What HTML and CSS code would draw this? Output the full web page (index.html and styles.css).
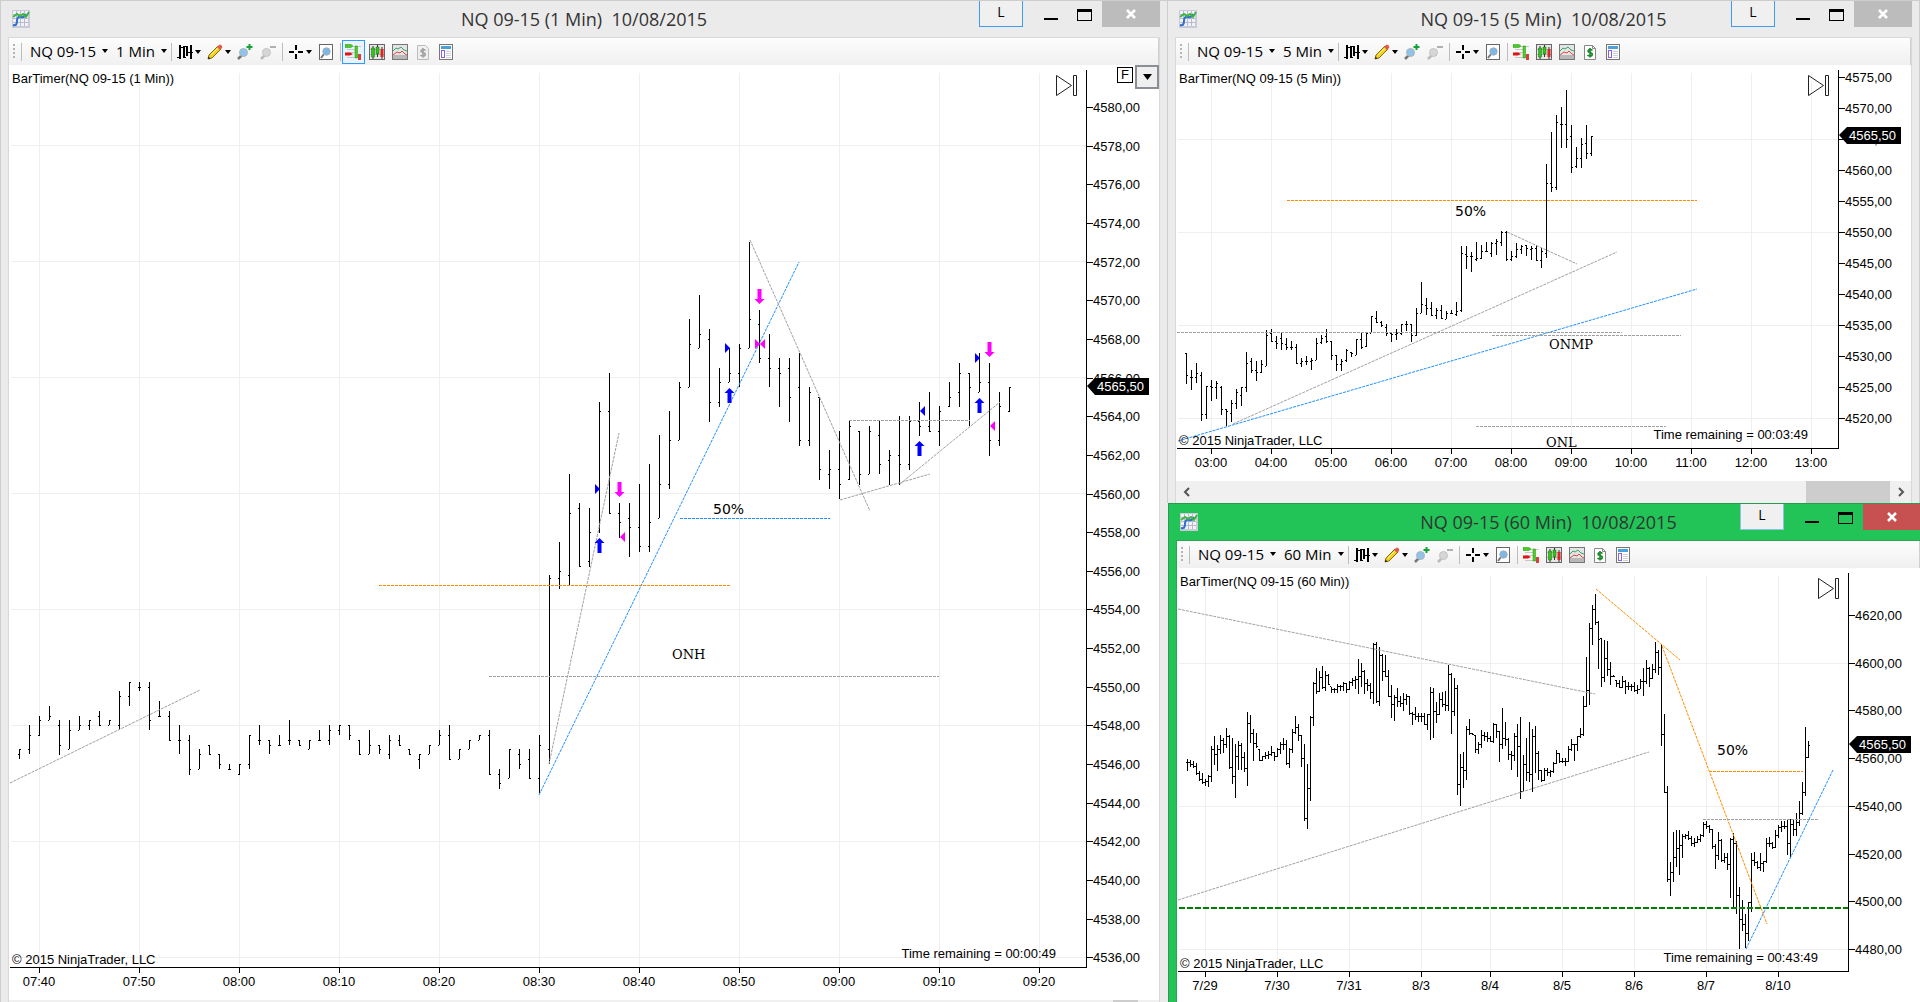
FILE: index.html
```html
<!DOCTYPE html>
<html lang="en">
<head>
<meta charset="utf-8">
<title>NinjaTrader charts – NQ 09-15</title>
<link rel="stylesheet" href="styles.css">
</head>
<body>
<svg class="sprite" aria-hidden="true">
  <symbol id="i-app" viewBox="0 0 18 18">
    <rect x="0" y="0" width="18" height="18" fill="#c9c9d8"/>
    <path d="M1 1h15v15H1z" fill="#f1f1fa"/>
    <path d="M4.500 1v15M8.500 1v15M12.500 1v15M1 4.500h15M1 8.500h15M1 12.500h15" stroke="#b9b9cc" fill="none"/>
    <path d="M1 15q4 1 4-4t4-4q3 1 5-3" stroke="#2f6fd0" stroke-width="2" fill="none"/>
    <path d="M1 7l4-3 3 2 3-2 3 3 3-5" stroke="#3fb53f" stroke-width="2" fill="none"/>
  </symbol>
  <symbol id="i-down" viewBox="0 0 6 4"><path d="M0 0h6L3 4z"/></symbol>
  <symbol id="i-bars" viewBox="0 0 16 16">
    <path d="M3 1v14M7 2v12M10 2v10M14 1v14" stroke="#000" stroke-width="2" fill="none"/>
    <path d="M0 13.500h3M3 3.500h3M7 13.500h2M8 2.500h3M11 8.500h5" stroke="#000" stroke-width="1" fill="none"/>
  </symbol>
  <symbol id="i-pencil" viewBox="0 0 16 16">
    <path d="M1 15l1-4 9-9 3 3-9 9z" fill="#f6d21c" stroke="#8a6a10" stroke-width="1"/>
    <path d="M10 3l2-2q1-1 2.500 0.500T15 4l-2 2z" fill="#e25a4a"/>
    <path d="M1 15l.6-2.500 1.900 1.900z" fill="#222"/>
    <path d="M4 11l7-7" stroke="#fff3a0" fill="none"/>
  </symbol>
  <symbol id="i-zoomin" viewBox="0 0 16 16">
    <path d="M1 15l4-4" stroke="#777" stroke-width="2.500" fill="none"/>
    <circle cx="6.500" cy="8.500" r="4" fill="#8fc3ea" stroke="#aab4bd"/>
    <path d="M12.500 0v6M9.500 3h6" stroke="#14a336" stroke-width="2" fill="none"/>
  </symbol>
  <symbol id="i-zoomout" viewBox="0 0 16 16">
    <path d="M1 15l4-4" stroke="#bbb" stroke-width="2.500" fill="none"/>
    <circle cx="6.500" cy="8.500" r="4" fill="#d6d6d6" stroke="#c4c4c4"/>
    <path d="M10 3h6" stroke="#b0b0b0" stroke-width="2" fill="none"/>
  </symbol>
  <symbol id="i-cross" viewBox="0 0 16 16">
    <path d="M8 1v5M8 10v5M1 8h5M10 8h5" stroke="#000" stroke-width="2" fill="none"/>
  </symbol>
  <symbol id="i-find" viewBox="0 0 16 16">
    <rect x="1.500" y=".5" width="13" height="15" fill="#fff" stroke="#666"/>
    <path d="M3 14l3-4" stroke="#777" stroke-width="2" fill="none"/>
    <circle cx="8.500" cy="7.500" r="3.700" fill="#7db8e4" stroke="#9fb0bd"/>
  </symbol>
  <symbol id="i-depth" viewBox="0 0 16 16">
    <path d="M8 2.500h8M2 5.500h8M2 8.500h8M2 13.500h14M10 11.500h6" stroke="#c8c8c8" fill="none"/>
    <path d="M0 .5h6l2 1.500-2 1.500H0z" fill="#3fd11b" stroke="#2d8f10" stroke-width=".5"/>
    <path d="M0 8.500h5l3 1.500-3 1.500H0z" fill="#e01616"/>
    <path d="M10 2h2.500v12H10z" fill="#46d41e" stroke="#2d8f10" stroke-width=".5"/>
    <path d="M13 10h3v6h-3z" fill="#d24040"/>
  </symbol>
  <symbol id="i-candles" viewBox="0 0 16 16">
    <rect x=".5" y=".5" width="15" height="15" fill="#e6e6e6" stroke="#666"/>
    <path d="M1 5.500h14M1 10.500h14" stroke="#b5b5b5" fill="none"/>
    <path d="M4 2v13M8.500 1v12M13 3v12" stroke="#333" fill="none"/>
    <path d="M2.500 4h3v9h-3zM7 3h3v7H7z" fill="#31c41a" stroke="#1c6a10" stroke-width=".5"/><path d="M11.500 5h3v8h-3z" fill="#dc2626"/>
  </symbol>
  <symbol id="i-ind" viewBox="0 0 16 16">
    <rect x=".5" y=".5" width="15" height="15" fill="#e4e4e4" stroke="#777"/>
    <path d="M1 11h14v4H1z" fill="#b8b8b8"/>
    <path d="M1 7l3-3 2 1 3-2 3 3 3 1" stroke="#2fa866" fill="none"/>
    <path d="M1 11l4-3 3 1 2-2 3 3 2 1" stroke="#e04848" fill="none"/>
  </symbol>
  <symbol id="i-pnl" viewBox="0 0 16 16">
    <path d="M2.500 1.500h8l3 3v11h-11z" fill="#fff" stroke="#888"/><path d="M10.500 1.500v3h3" fill="none" stroke="#888"/>
    <path d="M10.500 6.500q-1-1-2.500-1t-2 1.500q0 1 2 1.500t2.300 1.500q0 2-2.300 2-1.700 0-2.500-1M8 4v9.500" stroke="#1d8a2a" stroke-width="1.700" fill="none"/>
  </symbol>
  <symbol id="i-pnloff" viewBox="0 0 16 16">
    <path d="M2.500 1.500h8l3 3v11h-11z" fill="#f0f0f0" stroke="#bbb"/>
    <path d="M10.500 6.500q-1-1-2.500-1t-2 1.500q0 1 2 1.500t2.300 1.500q0 2-2.300 2-1.700 0-2.500-1M8 4v9.500" stroke="#a4a4a4" stroke-width="1.700" fill="none"/>
  </symbol>
  <symbol id="i-props" viewBox="0 0 16 16">
    <rect x="1.500" y=".5" width="13" height="15" fill="#fff" stroke="#777"/>
    <path d="M3 2h10v3H3z" fill="#4aa0d8"/><rect x="3.500" y="6.500" width="3" height="7" fill="#fff" stroke="#8b5cf0"/>
    <path d="M8 7.500h5M8 9.500h5M8 11.500h5M8 13.500h5" stroke="#cfcfdc" fill="none"/>
  </symbol>
  <symbol id="i-min" viewBox="0 0 16 16"><path d="M1 12h14v2H1z"/></symbol>
  <symbol id="i-max" viewBox="0 0 16 16"><path d="M1 3h15v12H1zM2 6v8h13V6z" fill-rule="evenodd"/></symbol>
  <symbol id="i-close" viewBox="0 0 16 16"><path d="M4 4l8 8M12 4l-8 8" stroke="currentColor" stroke-width="2.500" fill="none"/></symbol>
  <symbol id="i-left" viewBox="0 0 8 10"><path d="M6 1L2 5l4 4" stroke="#555" stroke-width="2" fill="none"/></symbol>
  <symbol id="i-right" viewBox="0 0 8 10"><path d="M2 1l4 4-4 4" stroke="#555" stroke-width="2" fill="none"/></symbol>
</svg>

<main class="desktop">
  <section class="window window-main" aria-label="NQ 09-15 1 minute chart">
    <header class="titlebar">
      <svg class="app-icon"><use href="#i-app"/></svg>
      <h1 class="title">NQ 09-15 (1 Min)&nbsp; 10/08/2015</h1>
      <div class="controls"></div>
    </header>
    <div class="client">
      <div class="toolbar" data-period="1 Min" data-pnl="i-pnloff" data-depth="on"></div>
      <div class="chart-wrap">
        <svg class="chart" id="chart-1" viewBox="9 65 1150 935" role="img" aria-label="1 minute price bars"></svg>
        <div class="chart-tools">
          <button class="fixed-scale" type="button">F</button>
          <button class="scale-menu" type="button" aria-label="Scale options"><svg><use href="#i-down"/></svg></button>
        </div>
      </div>
      <div class="scrollbar"><button type="button" aria-label="Scroll left"><svg><use href="#i-left"/></svg></button><span class="thumb thumb-small"></span><button type="button" aria-label="Scroll right"><svg><use href="#i-right"/></svg></button></div>
    </div>
  </section>

  <section class="window window-top" aria-label="NQ 09-15 5 minute chart">
    <header class="titlebar">
      <svg class="app-icon"><use href="#i-app"/></svg>
      <h1 class="title">NQ 09-15 (5 Min)&nbsp; 10/08/2015</h1>
      <div class="controls"></div>
    </header>
    <div class="client">
      <div class="toolbar" data-period="5 Min" data-pnl="i-pnl"></div>
      <div class="chart-wrap">
        <svg class="chart" id="chart-5" viewBox="1176 65 735 416" role="img" aria-label="5 minute price bars"></svg>
      </div>
      <div class="scrollbar"><button type="button" aria-label="Scroll left"><svg><use href="#i-left"/></svg></button><span class="thumb"></span><button type="button" aria-label="Scroll right"><svg><use href="#i-right"/></svg></button></div>
    </div>
  </section>

  <section class="window window-active" aria-label="NQ 09-15 60 minute chart">
    <header class="titlebar">
      <svg class="app-icon"><use href="#i-app"/></svg>
      <h1 class="title">NQ 09-15 (60 Min)&nbsp; 10/08/2015</h1>
      <div class="controls"></div>
    </header>
    <div class="client">
      <div class="toolbar" data-period="60 Min" data-pnl="i-pnl"></div>
      <div class="chart-wrap">
        <svg class="chart" id="chart-60" viewBox="1177 568 743 440" role="img" aria-label="60 minute price bars"></svg>
      </div>
    </div>
  </section>
</main>
<script src="charts.js"></script>
</body>
</html>
```

FILE: styles.css
```css
* { box-sizing: border-box; }

body {
  margin: 0;
  background: #ebebeb;
  color: #000;
  font-family: "Open Sans", "Noto Sans", sans-serif;
}

button {
  margin: 0;
  padding: 0;
  border: 0;
  background: none;
  color: inherit;
  font: inherit;
}

.sprite { position: absolute; width: 0; height: 0; }

/* Desktop: one large window on the left, two stacked on the right */
.desktop {
  display: grid;
  grid-template-columns: 1167fr 753fr;
  grid-template-rows: auto 1fr;
  height: 100vh;
  overflow: hidden;
}

.window {
  --frame: #ebebeb;
  --edge: #cdcdcd;
  --client-edge: #d9d9d9;
  --close: #bcbcbc;
  min-width: 0;
  border: 1px solid var(--edge);
  border-bottom: 0;
  padding: 0 7px;
  background: var(--frame);
}

.window-main { grid-row: 1 / 3; border-right: 0; }

.window-active {
  --frame: #22c457;
  --edge: #2b9a4f;
  --client-edge: #2ba552;
  --close: #c75050;
  margin: 0 -9px 0 1px;
}

/* Title bar */
.titlebar {
  display: grid;
  grid-template-columns: 1fr auto 1fr;
  height: 36px;
}

.app-icon { width: 18px; height: 18px; margin: 9px 0 0 4px; }

.title {
  margin: 0;
  color: #333;
  font-size: 18px;
  font-weight: 400;
  line-height: 36px;
  white-space: nowrap;
}

.controls { display: flex; justify-content: flex-end; height: 26px; }
.controls svg { width: 16px; height: 16px; display: block; margin: 5px auto; }

.link-button {
  width: 44px;
  margin-right: 14px;
  border: 1px solid #3d9cf5;
  border-top: 0;
  padding-bottom: 4px;
  background: #f0f0f0;
  font-size: 14px;
  line-height: 20px;
}

.window-active .link-button { border-color: #8cc4e8; }

.minimize { width: 28px; }
.maximize { width: 37px; }
.close { width: 58px; background: var(--close); color: #fff; }

/* Client area */
.client {
  border: 1px solid var(--client-edge);
  border-bottom: 0;
  background: #fff;
}

.toolbar {
  display: flex;
  align-items: center;
  height: 27px;
  padding-left: 4px;
  border-right: 1px solid #d0d0d0;
  background: linear-gradient(#fdfdfd, #f0f0f0);
  font-size: 15px;
  line-height: 20px;
}

.grip {
  width: 2px;
  height: 16px;
  margin-right: 3px;
  background: repeating-linear-gradient(#b4b4b4 0 2px, transparent 2px 4px);
}

.divider { width: 1px; height: 18px; margin: 0 1px 0 3px; background: #bdbdbd; }

.picker { display: flex; align-items: center; gap: 6px; margin: 0 1px 2px 7px; white-space: nowrap; }

.tool {
  display: flex;
  align-items: center;
  gap: 2px;
  width: 23px;
  height: 24px;
  padding-left: 3px;
  border: 1px solid transparent;
}

.tool-menu { width: 30px; }
.tool-on { border-color: #3399ff; background: #e8f3fd; padding-left: 2px; }
.tool svg { flex: none; width: 16px; height: 16px; }
.picker .caret, .tool .caret { width: 6px; height: 4px; }

/* Chart */
.chart-wrap { position: relative; }
.chart { display: block; width: 100%; height: auto; overflow: hidden; }
.chart text { font-family: "Liberation Sans", Arial, sans-serif; font-size: 13px; }
.chart .note { font-family: "DejaVu Sans", sans-serif; font-size: 14px; }
.chart .note-serif { font-family: "DejaVu Serif", serif; font-size: 13px; }
.chart .last { fill: #fff; }
.grid, .axis, .bars { shape-rendering: crispEdges; }
.grid { fill: #efefef; }
.line { fill: none; stroke-width: 1; stroke-dasharray: 3 1; }
.gray { stroke: #a0a0a0; }
.blue { stroke: #1e90ff; }
.orange { stroke: #ff8c00; }
.green { stroke: #008000; stroke-width: 2; stroke-dasharray: 6 2; }
.play { fill: none; stroke: #222; stroke-width: 1; }

.chart-tools {
  position: absolute;
  top: 0;
  right: 0;
  display: flex;
  align-items: flex-start;
  gap: 2px;
}

.fixed-scale {
  width: 16px;
  height: 16px;
  margin-top: 2px;
  border: 1px solid #000;
  background: #fff;
  font-family: "Liberation Sans", Arial, sans-serif;
  font-size: 13px;
  line-height: 14px;
}

.scale-menu {
  width: 24px;
  height: 24px;
  border: 2px solid #8a8f96;
  background: #efefef;
}

.scale-menu svg { display: block; width: 9px; height: 6px; margin: 0 auto; }

/* Scroll bar */
.scrollbar { display: flex; height: 22px; background: #f0f0f0; }
.scrollbar button { width: 21px; }
.scrollbar svg { display: block; width: 8px; height: 10px; margin: 0 auto; }
.thumb { width: 84px; margin-left: auto; background: #cdcdcd; }
.thumb-small { width: 25px; }
```

FILE: charts.js
```js
// Window buttons and toolbars, shared by every chart window.
const icon = (id, cls = '') => `<svg class="${cls}" aria-hidden="true"><use href="#${id}"/></svg>`;
const caret = icon('i-down', 'caret');

document.querySelectorAll('.controls').forEach((el) => {
  el.innerHTML =
    '<button class="link-button" type="button">L</button>' +
    `<button class="minimize" type="button" aria-label="Minimize">${icon('i-min')}</button>` +
    `<button class="maximize" type="button" aria-label="Maximize">${icon('i-max')}</button>` +
    `<button class="close" type="button" aria-label="Close">${icon('i-close')}</button>`;
});

document.querySelectorAll('.toolbar').forEach((el) => {
  const tool = (id, label, menu, on) =>
    `<button class="tool${menu ? ' tool-menu' : ''}${on ? ' tool-on' : ''}" type="button" aria-label="${label}">${icon(id)}${menu ? caret : ''}</button>`;
  const divider = '<span class="divider"></span>';
  el.innerHTML =
    '<span class="grip"></span>' + divider +
    `<button class="picker" type="button">NQ 09-15${caret}</button>` +
    `<button class="picker" type="button">${el.dataset.period}${caret}</button>` + divider +
    tool('i-bars', 'Chart style', true) + tool('i-pencil', 'Drawing tools', true) +
    tool('i-zoomin', 'Zoom in') + tool('i-zoomout', 'Zoom out') + divider +
    tool('i-cross', 'Cursor', true) + tool('i-find', 'Data box') + divider +
    tool('i-depth', 'Chart trader', false, el.dataset.depth === 'on') +
    tool('i-candles', 'Data series') + tool('i-ind', 'Indicators') +
    tool(el.dataset.pnl, 'Strategies') + tool('i-props', 'Properties');
});

// Each run of bars is [high, low, open, close] in thirds of a unit below y0.
// When a row has three values the open is the previous close.
function barPath(runs) {
  let d = '';
  let last = null;
  for (const { x0, step, y0, rows } of runs) {
    rows.forEach((row, i) => {
      const [high, low] = row;
      const close = row[row.length - 1];
      let open = row.length === 4 ? row[2] : (last ?? close);
      open = Math.max(high, Math.min(low, open));
      last = close;
      const x = x0 + i * step;
      const top = y0 + Math.round(high / 3);
      const bottom = y0 + Math.max(Math.round(low / 3), Math.floor(close / 3) + 1);
      const o = y0 + Math.floor(open / 3);
      const c = y0 + Math.floor(close / 3);
      d += `M${x} ${top}h1V${bottom}h-1zM${x - 1} ${o}h1v1h-1zM${x + 1} ${c}h1v1h-1z`;
    });
  }
  return d;
}

function draw(id, c) {
  const { left, right, top, bottom } = c.plot;
  let s = '<g class="grid">';
  c.times.forEach(([x]) => { s += `<rect x="${x}" y="${top + 3}" width="1" height="${bottom - top - 3}"/>`; });
  c.gridY.forEach((y) => { s += `<rect x="${left + 1}" y="${y}" width="${right - left - 1}" height="1"/>`; });
  s += '</g><g class="axis">';
  s += `<rect x="${right}" y="${top}" width="1" height="${bottom - top + 1}"/>`;
  s += `<rect x="${left}" y="${bottom}" width="${right - left + 1}" height="1"/>`;
  c.times.forEach(([x]) => { s += `<rect x="${x}" y="${bottom}" width="1" height="6"/>`; });
  c.prices.forEach(([y]) => { s += `<rect x="${right}" y="${y}" width="7" height="1"/>`; });
  s += '</g>';
  s += `<path class="bars" d="${barPath(c.bars)}"/>`;
  c.lines.forEach(([cls, x1, y1, x2, y2]) => {
    const flat = y1 === y2 && cls !== 'green' ? 0.5 : 0;
    s += `<path class="line ${cls}" d="M${x1} ${y1 + flat}L${x2} ${y2 + flat}"/>`;
  });
  (c.arrows || []).forEach(([dir, x, y]) => {
    s += dir === 'up'
      ? `<path fill="#00f" d="M${x} ${y}l5 5h-3v10h-4v-10h-3z"/>`
      : `<path fill="#f0f" d="M${x} ${y + 15}l5-5h-3v-10h-4v10h-3z"/>`;
  });
  (c.marks || []).forEach(([dir, fill, x, y]) => {
    s += `<path fill="${fill}" d="M${x} ${y}l${dir === 'right' ? -5 : 5}-5v10z"/>`;
  });
  c.prices.forEach(([y, t]) => { s += `<text x="${right + 7}" y="${y + 5}">${t}</text>`; });
  c.times.forEach(([x, t]) => { s += `<text x="${x}" y="${bottom + 19}" text-anchor="middle">${t}</text>`; });
  const m = c.last;
  s += `<path d="M${right + 1} ${m}l8-8h54v17h-54z"/><text class="last" x="${right + 11}" y="${m + 5}">4565,50</text>`;
  c.notes.forEach(([x, y, t]) => {
    s += `<text class="note${t === '50%' ? '' : ' note-serif'}" x="${x}" y="${y}">${t}</text>`;
  });
  s += `<text x="${left + 2}" y="${top + 13}">${c.name}</text>`;
  s += `<text x="${left + 2}" y="${c.copyY}">© 2015 NinjaTrader, LLC</text>`;
  s += `<text x="${right - 30}" y="${c.remainY}" text-anchor="end">Time remaining = ${c.remain}</text>`;
  const px = right - 30;
  s += `<path class="play" d="M${px + 0.5} ${top + 5.5}v20l15-10zM${px + 17.5} ${top + 5.5}h3v20h-3z"/>`;
  document.getElementById(id).innerHTML = s;
}

const range = (n, fn) => Array.from({ length: n }, (_, i) => fn(i));
const pad = (n) => String(n).padStart(2, '0');

draw('chart-1', {
  name: 'BarTimer(NQ 09-15 (1 Min))',
  plot: { left: 10, right: 1086, top: 70, bottom: 967 },
  copyY: 964, remainY: 958, remain: '00:00:49', last: 386,
  times: range(11, (i) => { const m = 460 + i * 10; return [39 + i * 100, `${pad(Math.floor(m / 60))}:${pad(m % 60)}`]; }),
  prices: range(23, (i) => [Math.round(107 + i * 38.65), `${4580 - i * 2},00`]),
  gridY: [145, 261, 377, 493, 609, 725, 841, 957],
  bars: [
    { x0: 19, step: 10, y0: 640, rows: [
      [328,358,343,328],[255,343,328,286],[229,287,286,241],[198,241,241,229],[240,344,256,316],[240,328,328,271],
      [228,271,271,256],[241,271,256,241],[213,256,229,256],[241,256,256,241],[154,271,256,169],[127,199,169,127],
      [127,154,142,142],[127,271,142,241],[184,229,229,229],[213,301,229,301],[255,343,301,301],[285,404,301,388],
      [328,388,388,343],[316,343,316,343],[343,388,343,373],[373,388,388,388],[373,404,404,373],[286,388,373,286],
      [255,316,301,301],[301,343,301,316],[286,316,316,316],[240,316,301,301],[301,316,301,316],[301,328,328,301],
      [270,301,301,301],[255,316,301,271],[256,286,271,256],[256,301,256,286],[301,343,301,343],[270,343,343,316],
      [316,343,316,328],[286,358,343,301],[286,316,301,316],[328,343,328,343],[343,388,358,343],[316,343,343,316],
      [270,316,316,286],[256,358,286,358],[328,358,358,328],[301,328,328,301],[286,301,301,286],[270,404,286,404],
      [388,446,404,430],[328,415,415,328],[328,388,343,373],[328,415,358,415],[286,460,415,316]] },
    { x0: 549, step: 10, y0: 220, rows: [
      [1066,1633,1588,1075],[966,1108,1075,1054],[763,1098,1066,880],[849,1040,865,1040],[865,1040,1024,937],
      [546,938,808,574],[459,880,574,880],[849,953,880,907],[849,1010,895,922],[793,995,922,979],[732,995,979,907],
      [645,895,895,793],[573,808,793,661],[487,661,661,502],[297,502,502,373],[225,385,385,343],[327,605,358,547],
      [445,560,547,487],[385,487,487,460],[373,502,460,385],[66,385,385,298],[270,430,313,415],[342,502,415,445],
      [414,560,445,460],[414,605,445,532],[400,677,502,661],[502,677,661,517],[532,779,532,748],[690,808,763,748],
      [633,837,748,793]] },
    { x0: 849, step: 10, y0: 320, rows: [
      [303,479,479,319],[334,494,334,463],[318,463,463,334],[303,463,346,433],[390,494,421,406],[289,494,406,433],
      [289,449,433,303],[246,347,303,319],[216,334,319,334],[259,377,334,274],[187,260,259,232],[129,260,216,160],
      [160,319,160,202],[99,217,217,187],[129,407,187,361],[216,377,361,259],[202,275,274,202]] },
  ],
  lines: [
    ['gray', 10, 783, 200, 690], ['gray', 489, 676, 939, 676], ['blue', 539, 795, 799, 262],
    ['gray', 549, 764, 619, 433], ['gray', 750, 240, 870, 511], ['gray', 840, 500, 930, 474],
    ['gray', 900, 484, 1000, 402], ['gray', 849, 420, 970, 420], ['blue', 680, 518, 830, 518],
    ['orange', 379, 585, 730, 585],
  ],
  arrows: [['up', 599.5, 538], ['up', 729.5, 388], ['up', 919.5, 441], ['up', 979.5, 398],
    ['down', 619.5, 482], ['down', 759.5, 289], ['down', 989.5, 342]],
  marks: [['right', '#00f', 600, 489], ['right', '#00f', 730, 348], ['right', '#00f', 980, 358], ['left', '#00f', 920, 411],
    ['left', '#f0f', 620, 537], ['right', '#f0f', 760, 344], ['left', '#f0f', 760, 344], ['left', '#f0f', 990, 426]],
  notes: [[713, 514, '50%'], [672, 659, 'ONH']],
});

draw('chart-5', {
  name: 'BarTimer(NQ 09-15 (5 Min))',
  plot: { left: 1177, right: 1838, top: 70, bottom: 448 },
  copyY: 445, remainY: 439, remain: '00:03:49', last: 135,
  times: range(11, (i) => [1211 + i * 60, `${pad(3 + i)}:00`]),
  prices: range(12, (i) => [77 + i * 31, `${4575 - i * 5},00`]),
  gridY: [139, 232, 325, 418],
  bars: [
    { x0: 1186, step: 5, y0: 300, rows: [
      [160,253,160,226],[210,269,232,232],[190,250,232,220],[216,362,226,343],[259,356,343,259],[240,302,259,262],
      [244,296,262,250],[258,346,262,328],[328,377,328,334],[300,367,340,310],[267,326,310,277],[262,317,285,262],
      [156,275,262,190],[175,220,185,211],[183,244,211,217],[180,220,217,194],[90,199,199,107],[87,125,100,125],
      [108,147,125,130],[100,150,115,130],[114,150,133,142],[124,150,142,142],[132,193,142,190],[175,202,190,184],
      [169,196,184,184],[175,209,184,181],[114,181,181,130],[106,133,127,115],[87,128,110,124],[124,181,124,167],
      [165,212,167,194],[178,212,194,184],[148,185,181,151],[155,172,157,160],[116,166,166,118],[100,148,118,142],
      [98,140,140,100],[49,100,100,49],[34,68,55,67],[64,82,67,76],[73,109,82,100],[98,125,100,103],[88,119,103,100],
      [72,106,100,73],[64,92,73,73],[73,127,73,106],[23,109,106,40]] },
    { x0: 1421, step: 5, y0: 80, rows: [
      [606,700,700,673],[655,705,676,685],[667,707,685,706],[684,717,706,690],[675,718,690,715],[693,718,718,700],
      [690,702,700,700],[667,707,702,693],[498,695,692,520],[498,567,522,528],[517,576,530,530],[487,542,538,535],
      [496,537,535,515],[487,517,515,515],[487,530,520,490],[477,524,490,485],[453,499,487,457],[453,542,457,538],
      [513,542,538,530],[488,533,530,508],[495,522,508,500],[495,529,495,505],[497,540,507,505],[496,542,505,542],
      [503,563,542,515],[252,533,520,310],[156,335,310,322],[105,330,322,127],[82,204,133,133],[30,205,133,178],
      [135,278,168,262],[202,264,258,235],[175,264,235,193],[135,237,190,220],[168,228,220,170]] },
  ],
  lines: [
    ['orange', 1287, 200, 1697, 200], ['blue', 1178, 441, 1697, 289], ['gray', 1233, 424, 1617, 252],
    ['gray', 1507, 232, 1577, 264], ['gray', 1177, 332, 1622, 332], ['gray', 1492, 335, 1681, 335],
    ['gray', 1476, 426, 1666, 426],
  ],
  notes: [[1455, 216, '50%'], [1549, 349, 'ONMP'], [1546, 447, 'ONL']],
});

draw('chart-60', {
  name: 'BarTimer(NQ 09-15 (60 Min))',
  plot: { left: 1178, right: 1848, top: 573, bottom: 971 },
  copyY: 968, remainY: 962, remain: '00:43:49', last: 744,
  times: [[1205, '7/29'], [1277, '7/30'], [1349, '7/31'], [1421, '8/3'], [1490, '8/4'], [1562, '8/5'],
    [1634, '8/6'], [1706, '8/7'], [1778, '8/10']],
  prices: range(8, (i) => [Math.round(615 + i * 47.7), `${4620 - i * 20},00`]),
  gridY: [663, 806, 949],
  bars: [
    { x0: 1187, step: 3, y0: 580, rows: [
      [537,574,547],[540,560,553],[543,565,560],[550,585,580],[573,603,598],[580,613,607],[598,617,603],[585,620,590],
      [498,605,508],[468,555,522],[495,573,508],[465,523,480],[473,520,492],[444,504,470],[465,567,562],[473,613,590],
      [492,654,530],[483,570,495],[488,570,533],[515,577,565],[396,617,430],[405,488,460],[447,543,490],[459,505,500],
      [508,543,540],[527,543,530],[517,536,525],[513,538,523],[498,527,517],[515,543,528],[505,530,508],[485,523,493],
      [474,510,492],[480,555,550],[504,563,507],[448,518,457],[408,462,442],[432,483,467],[465,560,535],[492,722,715],
      [552,746,625],[408,663,412],[307,437,310],[264,342,333],[273,335,293],[258,327,323],[273,333,285],[283,315,313],
      [320,338,328],[323,340,328],[313,340,320],[315,333,320],[307,333,310],[308,338,328],[303,330,307],[295,317,300],
      [288,328,298],[237,342,290],[248,320,273],[270,342,310],[297,333,315],[310,358,338],[189,371,193],[186,368,363],
      [201,377,227],[223,302,275],[226,292,288],[270,350,348],[316,413,373],[345,423,353],[323,380,365],[347,380,370],
      [339,393,358],[343,375,348],[348,405,400],[397,434,403],[380,420,410],[400,425,408],[400,425,408],[400,433,432],
      [402,450,403],[321,479,337],[324,473,395],[366,430,403],[339,405,357],[335,382,373],[333,392,375],[255,393,283],
      [279,462,395],[295,408,325],[316,645,612],[522,678,563],[516,624,570],[438,600,447],[417,464,460],[460,466,463],
      [465,520,507],[485,522,493],[450,503,465],[456,482,468],[455,485,475],[468,487,485],[430,488,433],[432,475,453],
      [453,545,493],[384,508,475],[426,498,478],[474,541,523],[512,570,527],[459,544,468],[432,590,500],[411,657,633],
      [525,637,553],[474,603,577],[426,605,583],[447,636,468],[438,580,520],[513,600,570],[570,605,600],[565,602,572],
      [564,588,577],[570,590,575],[547,580,550],[510,553,520],[520,550,543],[533,548,545],[535,557,543],[497,545,508],
      [477,513,493],[492,543,493],[468,512,470],[444,475,463],[348,467,380],[232,380,330],[130,375,145],[75,195,88],
      [42,135,127],[122,267,178]] },
    { x0: 1601, step: 3, y0: 570, rows: [
      [204,350,322],[210,335,265],[212,318,298],[276,345,318],[316,322,318],[330,350,340],[330,355,352],[318,355,335],
      [330,372,348],[336,360,348],[343,363,348],[335,365,360],[345,372,358],[327,358,333],[294,377,335],[270,342,295],
      [290,350,325],[282,327,297],[215,310,248],[240,316,292],[222,527,493],[432,668,667],[648,937,927],[876,978,907],
      [787,935,862],[780,892,835],[780,915,825],[793,864,800],[792,808,797],[782,810,805],[797,828,820],[803,830,817],
      [798,818,808],[793,815,797],[756,800,763],[753,777,768],[765,790,778],[777,837,828],[822,897,855],[786,870,810],
      [808,877,872],[848,878,863],[850,900,883],[804,984,808],[790,1012,820],[812,1032,977],[950,1137,1048],
      [990,1083,1062],[1032,1134,1090],[996,1112,997],[849,1027,870],[847,887,878],[873,897,893],[850,902,880],
      [873,906,873],[803,880,820],[802,830,820],[815,838,832],[780,833,795],[765,803,772],[753,787,768],[753,778,768],
      [750,855,820],[748,862,763],[748,797,778],[730,797,757],[693,767,730],[636,735,667],[471,678,562],[513,563,525]] },
  ],
  lines: [
    ['gray', 1178, 609, 1595, 694], ['gray', 1178, 900, 1649, 752], ['green', 1179, 908, 1848, 908],
    ['orange', 1596, 589, 1680, 660], ['orange', 1662, 646, 1767, 924], ['orange', 1709, 771, 1803, 771],
    ['gray', 1703, 819, 1818, 819], ['blue', 1746, 949, 1833, 770],
  ],
  notes: [[1717, 755, '50%']],
});
```
